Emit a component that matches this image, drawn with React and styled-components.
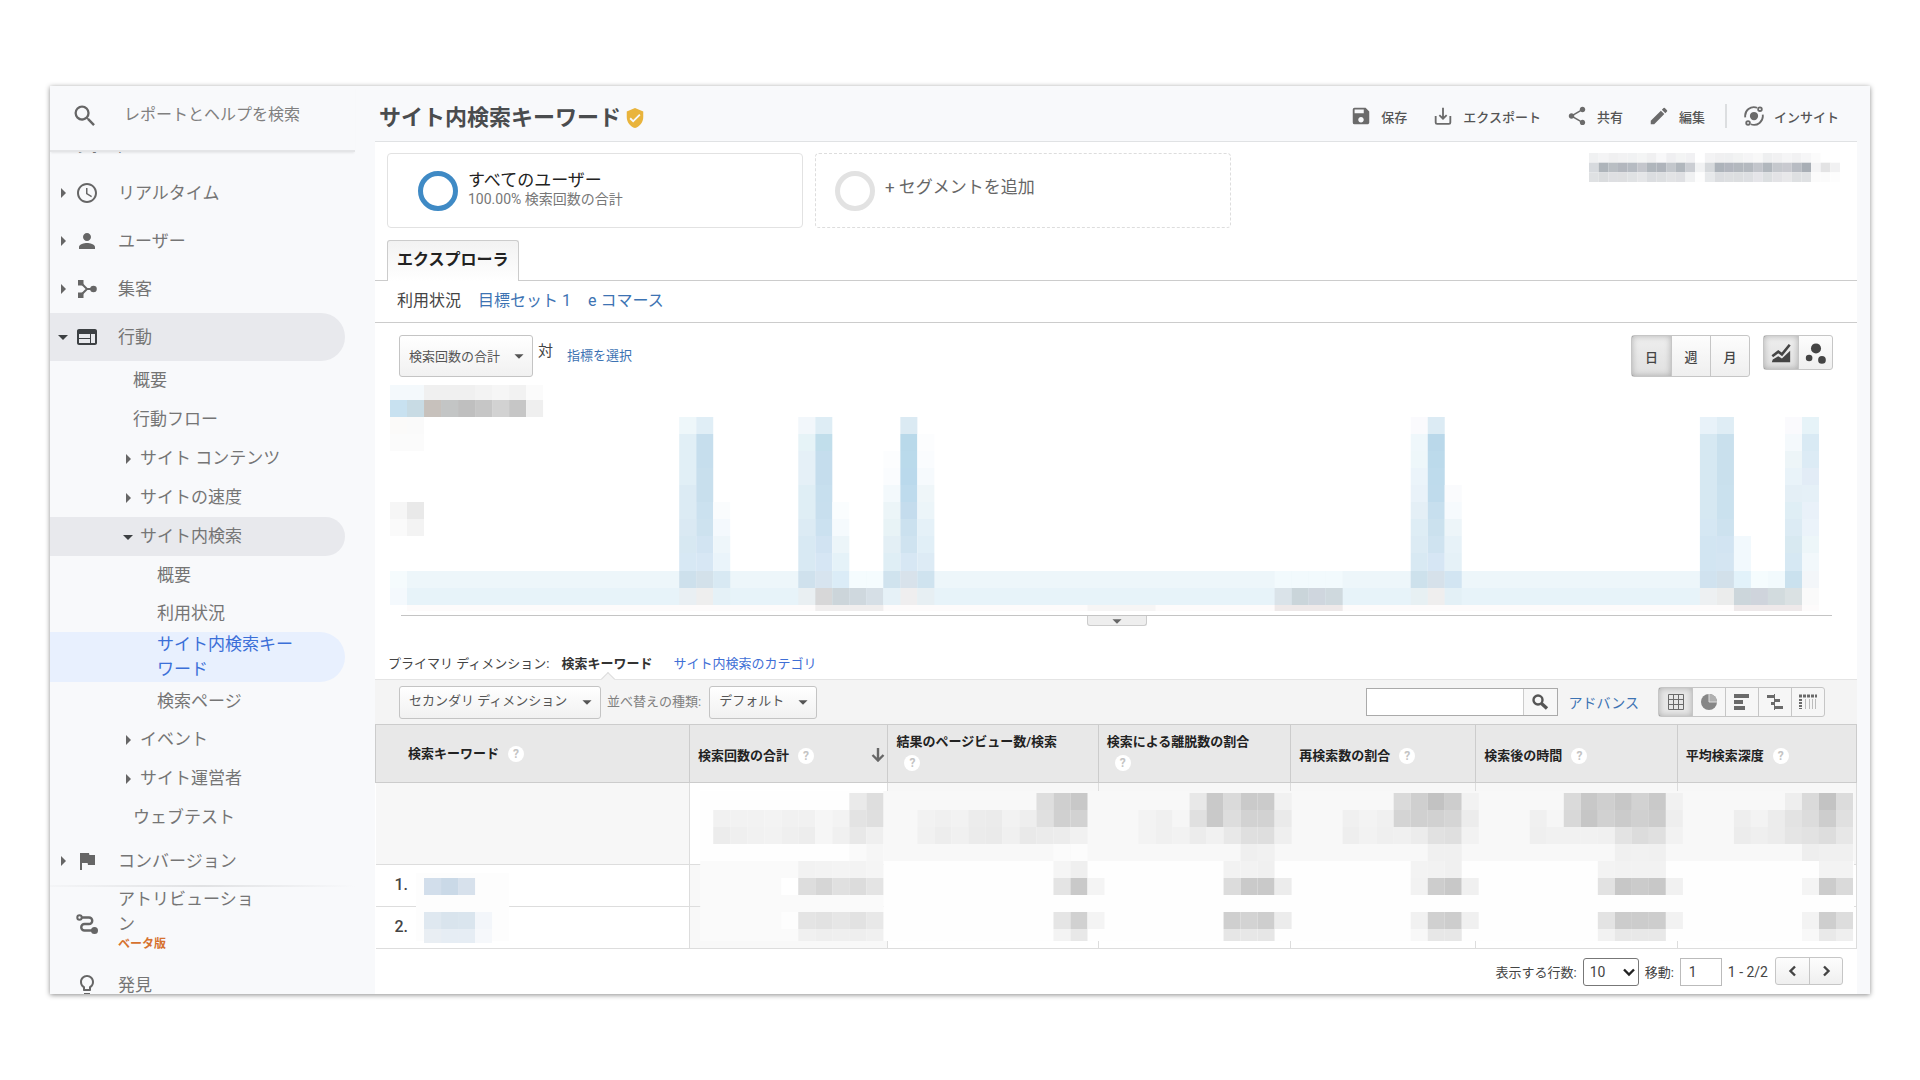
import React, { useState } from 'react';
import styled, { createGlobalStyle, css } from 'styled-components';
import {
    MdSearch,
    MdAccessTime,
    MdPerson,
    MdWeb,
    MdFlag,
    MdLightbulbOutline,
    MdArrowRight,
    MdArrowDropDown,
    MdSave,
    MdShare,
    MdEdit,
    MdVerifiedUser
} from 'react-icons/md';


//Icons

const AcquisitionIcon = () => (
    <svg viewBox="0 0 24 24" width="24" height="24" fill="currentColor">
        <rect x="3" y="3" width="5.500" height="5.500" />
        <rect x="3" y="15.500" width="5.500" height="5.500" />
        <circle cx="18.500" cy="12" r="3.300" />
        <path d="M6 6l6 6-6 6M12 12h6" fill="none" stroke="currentColor" strokeWidth="2" />
    </svg>
);

const AttributionIcon = () => (
    <svg viewBox="0 0 24 24" width="24" height="24" fill="none" stroke="currentColor" strokeWidth="2">
        <circle cx="4.5" cy="5.5" r="2.2" />
        <path d="M6.5 5.5H14a3.2 3.2 0 0 1 0 6.5h-4.500a3.200 3.200 0 0 0 0 6.500H18" strokeWidth="2.400" />
        <circle cx="19.500" cy="18.500" r="2.500" fill="currentColor" />
    </svg>
);

const ExportIcon = () => (
    <svg viewBox="0 0 24 24" width="22" height="22" fill="none" stroke="currentColor" strokeWidth="2">
        <path d="M4 12v7a1.500 1.500 0 0 0 1.500 1.500h13a1.500 1.500 0 0 0 1.500-1.500v-7" />
        <path d="M12 3v12M8 11l4 4 4-4" />
    </svg>
);

const InsightIcon = () => (
    <svg viewBox="0 0 24 24" width="22" height="22" fill="none" stroke="currentColor" strokeWidth="2">
        <circle cx="12" cy="12" r="4.500" fill="currentColor" stroke="none" />
        <path d="M2.500 13.500A9.600 9.600 0 0 1 15.500 3M21.500 10.500A9.600 9.600 0 0 1 8.500 21" />
        <circle cx="18.500" cy="4.500" r="2" />
        <circle cx="5.500" cy="19.500" r="2" />
    </svg>
);

const TrendIcon = () => (
    <svg viewBox="0 0 24 24" width="22" height="22" fill="currentColor">
        <path d="M2 22l1-3 6-3.500 4 2.500 9-8.500v12.500z" />
        <path d="M2.500 15.500l6.500-5 4 3L21.500 3" fill="none" stroke="currentColor" strokeWidth="2.800" />
    </svg>
);

const MotionIcon = () => (
    <svg viewBox="0 0 24 24" width="22" height="22" fill="currentColor">
        <circle cx="12" cy="7" r="5.500" />
        <circle cx="4.500" cy="17.500" r="3.600" />
        <circle cx="18.500" cy="19.500" r="4.200" />
    </svg>
);

const GridIcon = () => (
    <svg viewBox="0 0 16 16" width="16" height="16" fill="none" stroke="currentColor">
        <path d="M0.500 0.500h15v15h-15zM0.500 5.500h15M0.500 10.500h15M5.500 0.500v15M10.500 0.500v15" />
    </svg>
);

const PieIcon = () => (
    <svg viewBox="0 0 16 16" width="16" height="16">
        <circle cx="8" cy="8" r="8" fill="#868686" />
        <path d="M8 8V0a8 8 0 0 1 8 8z" fill="#b0b0b0" />
        <path d="M8 0v8h8" fill="none" stroke="#dedede" />
    </svg>
);

const BarsIcon = () => (
    <svg viewBox="0 0 16 16" width="16" height="16" fill="currentColor">
        <rect y="0" width="15" height="4" />
        <rect y="6" width="9" height="4" />
        <rect y="12" width="11" height="4" />
    </svg>
);

const CompareIcon = () => (
    <svg viewBox="0 0 16 16" width="16" height="16" fill="currentColor">
        <rect x="0" y="1" width="8" height="3" />
        <rect x="8" y="5" width="5" height="3" />
        <rect x="4" y="8" width="4" height="3" />
        <rect x="8" y="12" width="8" height="3" />
        <rect x="7" y="0" width="1" height="16" />
    </svg>
);

const PivotIcon = () => (
    <svg viewBox="0 0 18 16" width="18" height="16" fill="none" stroke="currentColor">
        <path d="M0 2h18" strokeWidth="3" strokeDasharray="3 1" />
        <path d="M1.500 5v10" strokeWidth="3" strokeDasharray="2 1" />
        <path d="M6.500 5v10M10.500 5v10M13.500 5v10M16.500 5v10" opacity="0.400" />
    </svg>
);

const LensIcon = () => (
    <svg viewBox="0 0 18 18" width="18" height="18" fill="none" stroke="currentColor">
        <circle cx="7" cy="7" r="4.500" strokeWidth="2.400" />
        <path d="M10.500 10.500l5.500 5" strokeWidth="3.400" />
    </svg>
);

const Chevron = ({ d }) => (
    <svg viewBox="0 0 12 12" width="12" height="12" fill="none" stroke="currentColor" strokeWidth="2.400">
        <path d={d} />
    </svg>
);

const SortIcon = () => (
    <svg viewBox="0 0 14 14" width="14" height="14" fill="none" stroke="currentColor" strokeWidth="2.400">
        <path d="M7 0v12M1.500 7L7 12.500 12.500 7" />
    </svg>
);


//Data

const topMenu = [
    { label: 'リアルタイム', icon: <MdAccessTime /> },
    { label: 'ユーザー', icon: <MdPerson /> },
    { label: '集客', icon: <AcquisitionIcon /> }
];

const behaviorMenu = [
    { label: '概要', level: 2 },
    { label: '行動フロー', level: 2 },
    { label: 'サイト コンテンツ', level: 2, arrow: true },
    { label: 'サイトの速度', level: 2, arrow: true },
    { label: 'サイト内検索', level: 2, arrow: true, open: true },
    { label: '概要', level: 3 },
    { label: '利用状況', level: 3 },
    { label: 'サイト内検索キーワード', level: 3, current: true },
    { label: '検索ページ', level: 3 },
    { label: 'イベント', level: 2, arrow: true },
    { label: 'サイト運営者', level: 2, arrow: true },
    { label: 'ウェブテスト', level: 2 }
];

const columns = [
    { label: '検索キーワード', width: '21.2%' },
    { label: '検索回数の合計', width: '13.4%', sorted: true },
    { label: '結果のページビュー数/検索', width: '14.2%', wrap: true },
    { label: '検索による離脱数の割合', width: '13%', wrap: true },
    { label: '再検索数の割合', width: '12.5%' },
    { label: '検索後の時間', width: '13.6%' },
    { label: '平均検索深度', width: '12.1%' }
];

// masked chart: column -> colours from the top row down, "-" leaves a cell empty
const spikes = {
    17: 'eef7fa e1eff6 e1eff6 e1eff6 dcebf4 dcebf4 dae9f3 d7e8f2 d7e8f4 cde0ec e9eff3',
    18: 'e0eef6 c6deed c6deed c8dfed c8dfed cbe1ef cde2ef d2e4f2 d7e7f4 d3e1ea eeeeee',
    19: '- - - - - fafcfd f4f9fd eef6fa eaf4fa d8e9f3 e5f1f7',
    24: 'f2f7fb e6f3f7 e5f0f7 e5f0f7 dfeef5 dfeef5 dcebf4 d8e9f3 d8e9f3 cfe1ed e9eff2',
    25: 'deedf5 c1deeb c5dded c5dded c7dfee c8dfee cbe1f0 d1e3f2 d6e6f4 d7e4ef d7d7d8',
    26: '- - - - - fafdfe f5fafd ecf5f9 e5f2f8 dbecf7 ccd5da',
    27: '- - - - - - - - - f5fcfe cfd8de',
    28: '- - - - - - - - - f5fcfe d6dfe6',
    29: '- - fcfdfe fafcfe f3f9fc ecf5f8 e8f3f6 e3eff5 dfeef5 d0e3ee e6f1f7',
    30: 'dbeaf3 b9d9ea badaeb bad9ec bedbed c4dced cbe1ef cfe3f0 d7e7f4 d8e2eb efeeef',
    31: '- fcfdfe fafcfe f6fafd eff6f9 ecf5f9 e5f1f8 e1eff7 ddebf5 cfe3ef e7eff3',
    52: '- - - - - - - - - f2fafd dae3e9',
    53: '- - - - - - - - - f2fafd cad5da',
    54: '- - - - - - - - - f2fafd cfd6de',
    55: '- - - - - - - - - f2fafd cfd9de',
    60: 'fafafd eff7fb eef7fa ebf4fa e9f2f9 e4eff6 deedf5 dcebf4 d8e9f3 cde1ec e7f0f3',
    61: 'dcebf4 bad8ea bcdaeb bedbec bfdbec c7dfee cbe1ee cfe3f0 d6e6f4 d6e1ea efeeee',
    62: '- - - - fafbfd f6fafd edf5f9 e7f2f8 e5f1f7 d2e5f2 e3f0f6',
    77: 'e8f2f9 d6e8f2 d6e8f2 d6e8f2 d6e8f2 d6e8f2 d5e7f3 d2e5f2 d2e5f2 d0e2ef edf0f2',
    78: 'dfedf5 c9e0ed c9e0ed c9e0ed cae1ee cae1ee cde2ef d2e4f2 d4e5f2 d2e0ea ebecec',
    79: '- - - - - - - f2f9fd f2f9fd e2f2fa ccd6db',
    80: '- - - - - - - - - f5fcfe cfd4dc',
    81: '- - - - - - - - - f2fafd d2dbde',
    82: 'fafafd f4f9fc edf5f8 e9f3f9 e4eff6 dfeef5 dcebf4 d8e9f1 d6e8f3 cae1ee dae1e3',
    83: 'e6f3f8 d9eaf4 dcebf5 e2ecf6 e5f0f7 e9f1f9 ebf3fa edf6f9 f2f8fb f3f6f9 fafafa'
};

const legendCells = [
    'f4f9fc f4f9fc f0f0f0 f0f0f0 f0f0f0 f3f3f3 f6f6f6 f2f2f2 fbfbfb',
    'c8e1f0 c8dbe4 c7c1bc c3c5c5 bfbfbf c6c6c6 d2d2d2 c6c6c6 efefef'
];

// masked table values: y, height, then runs of [first column, grey levels]
const maskRows = [
    { y: 10, h: 17, runs: [[8, 'ea de'], [19, 'de cf c8'], [28, 'e8 c9 da ca cb f1'], [40, 'da cf c2 cd f2'], [50, 'da c8 cf c7 d2 c9 f1'], [63, 'ee da c3 dc']] },
    { y: 27, h: 17, runs: [[0, 'f1 f2 f2 f3 f1 f1 f6 f3 e3 df'], [12, 'f2 f0 f2 ec eb f2 ee e0 d0 d2'], [25, 'f3 f0 f6 e0 c9 dd d2 d2 ea'], [37, 'f0 f3 f0 d4 d0 d1 d5 ec'], [48, 'f0 f6 d8 c6 d1 cb d0 cc ee'], [60, 'ee f3 ec e3 dc cd e0']] },
    { y: 44, h: 17, runs: [[0, 'ec ef f1 f2 ef ed f6 f0 e8 ef'], [12, 'f1 ed f0 eb ea f0 e9 eb ec f1'], [25, 'f3 f0 f2 ec f1 e8 df de ef'], [37, 'ee f2 ef f0 ec e1 df f2'], [48, 'ef f1 f1 f1 f0 e3 dc e0 f2'], [60, 'ec ef ec e5 e2 dd e7']] },
    { y: 61, h: 17, runs: [[8, 'fa f6'], [20, 'fb fc'], [31, 'ef f1'], [42, 'f0 f0'], [53, 'f0 f1 f0'], [64, 'ee f0 f0']] },
    { y: 78, h: 17, runs: [[5, 'f2 f3 f4 f3 f5'], [20, 'f5 ef'], [30, 'f2 f2 f0'], [41, 'f3 f2 f0'], [52, 'f3 f2 f2 f2'], [65, 'f3 f3']] },
    { y: 95, h: 17, runs: [[4, 'ff dd d6 e0 dc e4'], [20, 'e4 c9 f4'], [30, 'dc ca c9 ec'], [41, 'f2 cd c8 f0'], [52, 'e2 c7 cb c8 f1'], [64, 'f4 cc da']] },
    { y: 129, h: 17, runs: [[4, 'fd e4 e2 e6 e2 e8'], [20, 'e5 d1 f4'], [30, 'cf d3 ce ec'], [41, 'f1 d0 cd f0'], [52, 'e3 cc cc cd f2'], [64, 'f3 ce dd']] },
    { y: 146, h: 12, runs: [[5, 'f0 ee ef ee f0'], [20, 'f3 e8'], [30, 'e6 e7 e6'], [41, 'f8 e7 e7'], [52, 'f2 e8 e8 e8'], [64, 'f8 e9 ef']] }
];

const accountCells = [
    'f0f1f2 f4f4f5 f0f0f1 f2f2f3 f1f2f3 f4f5f5 f0f0f1 f8f8f9 efeff1 f3f4f4 f1f1f3 ffffff f3f3f4 f0f0f1 eff0f1 f2f3f3 f5f5f6 f8f8f8 eeeff0 f1f1f2 f5f5f6 f2f2f3 f6f6f7 fbfbfb ffffff ffffff',
    'd7dade aeb4ba b9bec3 b3b7be b6bbc2 c4c6cc b0b6bc afb4bb c3c7cc b1b7bd cbced3 f1f2f3 d6d9dc adb3ba b2b6be b3b8be b4b9bf c2c5cb b1b7bd c5c8cd c8c9cf b8bcc3 a8aeb5 f4f4f5 e3e3e4 f1f1f2',
    'dfe1e3 dadcde dedfe2 dedfe1 e0e2e4 e5e6e8 dbdde0 dddfe1 e2e3e5 dfe0e3 f0f1f2 fdfdfd e7e9eb dbdde0 dddfe1 dcdee0 dddfe2 e5e5e9 dcdfe1 e3e3e6 e8e8ea dee0e2 dfe1e3 fbfbfb fbfbfb fdfdfd'
];

const Cells = ({ colors, x = 0, y, w = 17, h = 17 }) => (
    <>
        {colors.split(' ').map((c, i) => (
            c !== '-' && <rect key={i} x={x + i * w} y={y} width={w} height={h} fill={`#${c.length === 2 ? c + c + c : c}`} />
        ))}
    </>
);


//Sidebar

const Sidebar = () => (
    <Side>
        <SearchRow>
            <MdSearch />
            <input aria-label="レポートとヘルプを検索" placeholder="レポートとヘルプを検索" />
        </SearchRow>
        <Nav>
            <Section><span>レポート</span></Section>
            {topMenu.map((item) => (
                <MenuItem href="#" key={item.label}>
                    <MdArrowRight />
                    {item.icon}
                    <span>{item.label}</span>
                </MenuItem>
            ))}
            <MenuItem href="#" $open>
                <MdArrowDropDown />
                <MdWeb />
                <span>行動</span>
            </MenuItem>
            {behaviorMenu.map((item, i) => (
                <SubItem href="#" key={i} $level={item.level} $arrow={item.arrow} $open={item.open} $current={item.current}>
                    {item.arrow && (item.open ? <MdArrowDropDown /> : <MdArrowRight />)}
                    <span>{item.label}</span>
                </SubItem>
            ))}
            <MenuItem href="#">
                <MdArrowRight />
                <MdFlag />
                <span>コンバージョン</span>
            </MenuItem>
            <Divider />
            <MenuItem href="#" $plain $tall>
                <AttributionIcon />
                <span>アトリビューション<Beta>ベータ版</Beta></span>
            </MenuItem>
            <MenuItem href="#" $plain>
                <MdLightbulbOutline />
                <span>発見</span>
            </MenuItem>
        </Nav>
    </Side>
);


//Report header and segments

const Header = () => (
    <TopBar>
        <h1>サイト内検索キーワード</h1>
        <MdVerifiedUser color="#e9b43c" size={22} />
        <Actions>
            <button><MdSave />保存</button>
            <button><ExportIcon />エクスポート</button>
            <button><MdShare />共有</button>
            <button><MdEdit />編集</button>
            <i />
            <button><InsightIcon />インサイト</button>
        </Actions>
    </TopBar>
);

const Segments = () => (
    <SegmentRow>
        <Segment>
            <Ring $color="#3f8ac5" />
            <div>
                <p>すべてのユーザー</p>
                <small>100.00% 検索回数の合計</small>
            </div>
        </Segment>
        <Segment $empty>
            <Ring $color="#e2e2e2" />
            <div>
                <p>+ セグメントを追加</p>
            </div>
        </Segment>
        <Account viewBox="0 0 260 30" aria-hidden="true">
            {accountCells.map((row, i) => <Cells key={i} colors={row} y={i * 10} w={10} h={10} />)}
        </Account>
    </SegmentRow>
);

const Dropdown = ({ label, children, tall }) => (
    <SelectBox $tall={tall}>
        <select aria-label={label}>{children}</select>
        <MdArrowDropDown />
    </SelectBox>
);

const Chart = () => (
    <ChartSvg viewBox="0 0 1432 230" preserveAspectRatio="none" aria-hidden="true">
        {legendCells.map((row, i) => <Cells key={i} colors={row} y={i * 15} h={i ? 17 : 15} />)}
        <Cells colors="fbfaf9 fafafa" y={32} />
        <Cells colors="fbfbfb fbfbfb" y={49} />
        <Cells colors="f6f6f6 e9e9e9" y={117} />
        <Cells colors="fafafa f3f3f3" y={134} />
        <rect x="17" y="186" width="1394" height="17" fill="#edf6fa" />
        <rect x="17" y="203" width="1394" height="17" fill="#e7f3f9" />
        <Cells colors="f5fbfd" y={186} />
        <Cells colors="f4f9fd" y={203} />
        <rect x="17" y="220" width="1411" height="6" fill="#fdfbfb" />
        {Object.entries(spikes).map(([col, colors]) => (
            colors.split(' ').map((c, i) => (
                c !== '-' && <rect key={col + i} x={col * 17} y={i > 8 ? 186 + (i - 9) * 17 : 32 + i * 17} width="17" height={i === 8 ? 18 : 17} fill={`#${c}`} />
            ))
        ))}
        <rect x="425" y="220" width="68" height="6" fill="#f0eeee" />
        <rect x="697" y="220" width="68" height="6" fill="#f6f5f5" />
        <rect x="884" y="220" width="68" height="6" fill="#eee9e9" />
        <rect x="1343" y="220" width="68" height="6" fill="#eee9ea" />
    </ChartSvg>
);


//Table

const DataTable = () => (
    <TableWrap>
        <Table>
            <colgroup>
                {columns.map((col) => <col key={col.label} style={{ width: col.width }} />)}
            </colgroup>
            <thead>
                <tr>
                    {columns.map((col) => (
                        <th key={col.label} scope="col">
                            <HeadCell $wrap={col.wrap}>
                                <span>{col.label}</span>
                                <Help aria-label="ヘルプ">?</Help>
                                {col.sorted && <SortIcon />}
                            </HeadCell>
                        </th>
                    ))}
                </tr>
            </thead>
            <tbody>
                <SummaryRow>{columns.map((col) => <td key={col.label} />)}</SummaryRow>
                {[1, 2].map((n) => (
                    <tr key={n}>
                        {columns.map((col, i) => <td key={col.label}>{i === 0 && `${n}.`}</td>)}
                    </tr>
                ))}
            </tbody>
        </Table>
        <TableMask viewBox="0 0 1481 166" preserveAspectRatio="none" aria-hidden="true">
            <rect x="325" y="8" width="183" height="70" fill="#fefefe" />
            <rect x="508" y="8" width="970" height="70" fill="#f8f8f8" />
            <rect x="325" y="78" width="183" height="80" fill="#fafafa" />
            <rect x="508" y="78" width="970" height="80" fill="#fefefe" />
            <rect x="41" y="90" width="93" height="68" fill="#fdfdfd" />
            <Cells colors="d2deeb cad9e7 d7e1ec" x={49} y={95} />
            <Cells colors="dfe8f0 d9e4ed dae5ee f3f6fa" x={49} y={129} />
            <Cells colors="e9eef3 e6edf4 e6edf4 f6f8fb" x={49} y={146} h={14} />
            {maskRows.map((row) => (
                row.runs.map(([col, colors]) => (
                    <Cells key={`${row.y}-${col}`} colors={colors} x={338 + col * 17} y={row.y} h={row.h} />
                ))
            ))}
        </TableMask>
    </TableWrap>
);

const App = () => {

    const [period, setPeriod] = useState('日');
    const [view, setView] = useState(0);

    const views = [<GridIcon />, <PieIcon />, <BarsIcon />, <CompareIcon />, <PivotIcon />];
    const viewNames = ['表', '円グラフ', '棒グラフ', '比較', 'ピボット'];

    return (
        <>
            <GlobalStyle />
            <Window>
                <Sidebar />
                <Main>
                    <Header />
                    <Report>
                        <Segments />
                        <Tabs>
                            <button>エクスプローラ</button>
                        </Tabs>
                        <SubTabs>
                            <span>利用状況</span>
                            <a href="#">目標セット 1</a>
                            <a href="#">e コマース</a>
                        </SubTabs>
                        <ChartBar>
                            <Dropdown label="指標" tall><option>検索回数の合計</option></Dropdown>
                            <Versus>対</Versus>
                            <a href="#">指標を選択</a>
                            <Push />
                            <ButtonGroup $width={39} $height={42}>
                                {['日', '週', '月'].map((p) => (
                                    <GroupButton key={p} $active={p === period} onClick={() => setPeriod(p)}>{p}</GroupButton>
                                ))}
                            </ButtonGroup>
                            <ButtonGroup $width={34} $height={35}>
                                <GroupButton $active aria-label="折れ線グラフ"><TrendIcon /></GroupButton>
                                <GroupButton aria-label="モーション グラフ"><MotionIcon /></GroupButton>
                            </ButtonGroup>
                        </ChartBar>
                        <Chart />
                        <ChartEdge>
                            <button aria-label="グラフを閉じる"><MdArrowDropDown /></button>
                        </ChartEdge>
                        <Dimensions>
                            <span>プライマリ ディメンション:</span>
                            <b>検索キーワード</b>
                            <a href="#">サイト内検索のカテゴリ</a>
                        </Dimensions>
                        <TableBar>
                            <Dropdown label="セカンダリ ディメンション"><option>セカンダリ ディメンション</option></Dropdown>
                            <label htmlFor="sort">並べ替えの種類:</label>
                            <SelectBox>
                                <select id="sort"><option>デフォルト</option></select>
                                <MdArrowDropDown />
                            </SelectBox>
                            <Push />
                            <TableSearch>
                                <input aria-label="検索" />
                                <button aria-label="検索"><LensIcon /></button>
                            </TableSearch>
                            <a href="#">アドバンス</a>
                            <ButtonGroup $width={33} $height={30} $light>
                                {views.map((icon, i) => (
                                    <GroupButton key={i} $active={i === view} aria-label={viewNames[i]} onClick={() => setView(i)}>{icon}</GroupButton>
                                ))}
                            </ButtonGroup>
                        </TableBar>
                        <DataTable />
                        <Pager>
                            <label htmlFor="rows">表示する行数:</label>
                            <RowSelect>
                                <select id="rows"><option>10</option></select>
                                <Chevron d="M1 3.500l5 5 5-5" />
                            </RowSelect>
                            <label htmlFor="page">移動:</label>
                            <input id="page" defaultValue="1" />
                            <span>1 - 2/2</span>
                            <ButtonGroup $width={33} $height={28}>
                                <GroupButton aria-label="前へ"><Chevron d="M8 1.500L3.500 6 8 10.500" /></GroupButton>
                                <GroupButton aria-label="次へ"><Chevron d="M4 1.500L8.500 6 4 10.500" /></GroupButton>
                            </ButtonGroup>
                        </Pager>
                    </Report>
                </Main>
            </Window>
        </>
    );
};

const GlobalStyle = createGlobalStyle`
  * {
      box-sizing: border-box;
      margin: 0;
      padding: 0;
  }
  body {
      background: #fff;
      color: #444;
      font: 13px Roboto, "Noto Sans CJK JP", sans-serif;
  }
  button, input, select {
      font: inherit;
      color: inherit;
  }
  button {
      cursor: pointer;
  }
  a {
      color: #3d73b3;
      text-decoration: none;
  }
  svg {
      flex: none;
  }
`;

const Window = styled.div`
  display: flex;
  height: calc(100vh - 172px);
  margin: 86px 50px;
  background: #f8f9fb;
  box-shadow: 0 1px 5px rgba(0, 0, 0, 0.45);
  overflow: hidden;
`;

const Side = styled.aside`
  flex: none;
  display: flex;
  flex-direction: column;
  width: 325px;
  color: #757575;
`;

const SearchRow = styled.div`
  flex: none;
  display: flex;
  align-items: center;
  gap: 25px;
  height: 66px;
  margin-right: 20px;
  padding: 0 0 8px 21px;
  border-bottom: 2px solid #e4e5e7;
  box-shadow: 0 2px 2px -1px rgba(0, 0, 0, 0.08);
  svg {
      width: 28px;
      height: 28px;
      margin-top: 4px;
      color: #666;
  }
  input {
      width: 200px;
      border: none;
      background: none;
      font-size: 16px;
      outline: none;
  }
  input::placeholder {
      color: #808080;
  }
`;

const Nav = styled.nav`
  flex: 1;
  min-height: 0;
  overflow: hidden;
`;

const Section = styled.div`
  height: 17px;
  padding-left: 26px;
  overflow: hidden;
  font-size: 13px;
  line-height: 20px;
  span {
      display: block;
      margin-top: -14px;
  }
`;

const MenuItem = styled.a`
  display: flex;
  align-items: center;
  height: ${(p) => (p.$tall ? 74 : 48)}px;
  margin-right: 30px;
  padding-left: ${(p) => (p.$plain ? 25 : 1)}px;
  border-radius: 0 24px 24px 0;
  background: ${(p) => (p.$open ? '#e8e9ed' : 'none')};
  color: #757575;
  font-size: 17px;
  line-height: 25px;
  svg {
      width: 24px;
      height: 24px;
      color: ${(p) => (p.$open ? '#3c4043' : '#666')};
  }
  span {
      width: 140px;
      margin-left: 19px;
      padding-bottom: ${(p) => (p.$tall ? 10 : 0)}px;
  }
`;

const Beta = styled.b`
  display: block;
  color: #d6722f;
  font-size: 12px;
  line-height: 14px;
`;

const SubItem = styled(MenuItem)`
  height: ${(p) => (p.$level === 2 ? 39 : 38)}px;
  padding-left: ${(p) => (p.$level === 3 ? 107 : p.$arrow ? 66 : 83)}px;
  span {
      width: auto;
      margin-left: 0;
  }
  ${(p) => p.$current && css`
      height: 50px;
      padding-right: 40px;
      border-radius: 0 25px 25px 0;
      background: #e8f0fe;
      color: #3b6fd8;
  `}
`;

const Divider = styled.hr`
  height: 2px;
  margin-right: 20px;
  border: none;
  background: linear-gradient(90deg, #f4f5f7, #e0e1e3 50%, #f8f9fb);
`;

const Main = styled.main`
  flex: 1;
  min-width: 0;
  display: flex;
  flex-direction: column;
  margin-right: 13px;
`;

const TopBar = styled.header`
  flex: none;
  display: flex;
  align-items: center;
  height: 56px;
  padding: 8px 18px 0 4px;
  border-bottom: 1px solid #e0e2e4;
  h1 {
      margin-right: 3px;
      font-size: 22px;
      font-weight: 700;
      line-height: 32px;
      color: #4a4c4e;
  }
`;

const Actions = styled.div`
  display: flex;
  align-items: center;
  gap: 25px;
  margin: 0 0 3px auto;
  button {
      display: flex;
      align-items: center;
      gap: 9px;
      border: none;
      background: none;
      color: #555;
      font-weight: 500;
  }
  svg {
      width: 22px;
      height: 22px;
      color: #6b6b6b;
  }
  i {
      width: 2px;
      height: 24px;
      margin: 0 -9px 0 -5px;
      background: #dcdee0;
  }
`;

const Report = styled.div`
  flex: 1;
  min-height: 0;
  background: #fff;
`;

const SegmentRow = styled.div`
  display: flex;
  gap: 12px;
  padding: 11px 17px 12px 12px;
`;

const Segment = styled.button`
  flex: 0 1 416px;
  display: flex;
  align-items: center;
  gap: 10px;
  height: 75px;
  padding: 0 0 0 ${(p) => (p.$empty ? 19 : 30)}px;
  border: 1px ${(p) => (p.$empty ? 'dashed #ddd' : 'solid #e2e2e2')};
  border-radius: 4px;
  background: #fff;
  text-align: left;
  div {
      padding-bottom: ${(p) => (p.$empty ? 7 : 4)}px;
  }
  p {
      color: ${(p) => (p.$empty ? '#666' : '#222')};
      font-size: 17px;
      line-height: 20px;
  }
  small {
      display: block;
      color: #777;
      font-size: 14px;
      line-height: 18px;
  }
`;

const Ring = styled.span`
  flex: none;
  width: 40px;
  height: 40px;
  border: 5px solid ${(p) => p.$color};
  border-radius: 50%;
`;

const Account = styled.svg`
  width: 251px;
  height: 29px;
  margin-left: auto;
`;

const Tabs = styled.div`
  display: flex;
  height: 41px;
  padding-left: 12px;
  border-bottom: 1px solid #ccc;
  button {
      height: 41px;
      padding: 0 9px 6px;
      border: 1px solid #ccc;
      border-bottom: none;
      border-radius: 3px 3px 0 0;
      background: linear-gradient(#f2f2f2, #fff);
      color: #222;
      font-size: 16px;
      font-weight: 700;
  }
`;

const SubTabs = styled.div`
  display: flex;
  align-items: center;
  gap: 17px;
  height: 42px;
  padding: 0 0 6px 22px;
  border-bottom: 1px solid #ccc;
  font-size: 16px;
`;

const ChartBar = styled.div`
  display: flex;
  align-items: flex-start;
  padding: 12px 24px 8px 24px;
  > a {
      line-height: 42px;
  }
  > div + div {
      margin-left: 13px;
  }
`;

const SelectBox = styled.span`
  position: relative;
  display: inline-flex;
  align-items: center;
  color: #555;
  select {
      appearance: none;
      height: ${(p) => (p.$tall ? 42 : 33)}px;
      padding: 0 31px ${(p) => (p.$tall ? 0 : 3)}px 9px;
      border: 1px solid #c4c4c4;
      border-radius: 3px;
      background: linear-gradient(#fff, #f1f1f1);
  }
  svg {
      position: absolute;
      right: 3px;
      width: 22px;
      height: 22px;
      pointer-events: none;
  }
`;

const Versus = styled.span`
  margin: 0 14px 0 5px;
  font-size: 15px;
  line-height: 32px;
`;

const Push = styled.span`
  flex: 1;
`;

const ButtonGroup = styled.div`
  display: flex;
  height: ${(p) => p.$height}px;
  border: 1px solid #c6c6c6;
  border-radius: 3px;
  background: ${(p) => (p.$light ? '#f6f6f6' : 'linear-gradient(#fdfdfd, #efefef)')};
  button {
      width: ${(p) => p.$width}px;
      color: ${(p) => (p.$light ? '#6a6a6a' : '#444')};
  }
`;

const GroupButton = styled.button`
  display: flex;
  align-items: center;
  justify-content: center;
  border: none;
  background: none;
  font-weight: 500;
  & + & {
      border-left: 1px solid #c6c6c6;
  }
  ${(p) => p.$active && css`
      background: rgba(0, 0, 0, 0.06);
      box-shadow: inset 0 0 6px rgba(0, 0, 0, 0.25);
  `}
`;

const ChartSvg = styled.svg`
  display: block;
  width: calc(100% - 49px);
  height: 230px;
  margin-left: 15px;
`;

const ChartEdge = styled.div`
  display: flex;
  justify-content: center;
  height: 32px;
  margin: 0 25px 0 26px;
  border-top: 1px solid #c4c4c4;
  button {
      display: flex;
      justify-content: center;
      align-items: center;
      width: 60px;
      height: 10px;
      border: 1px solid #ccc;
      border-top: none;
      border-radius: 0 0 3px 3px;
      background: #eee;
      color: #666;
  }
  svg {
      width: 22px;
      height: 22px;
  }
`;

const Dimensions = styled.div`
  display: flex;
  align-items: baseline;
  height: 32px;
  padding-left: 13px;
  line-height: 34px;
  b {
      position: relative;
      margin: 0 21px 0 12px;
      color: #333;
  }
  b::after {
      content: '';
      position: absolute;
      left: 42px;
      bottom: -3px;
      width: 9px;
      height: 9px;
      border: 1px solid #ddd;
      border-right: none;
      border-bottom: none;
      background: #f4f4f4;
      transform: rotate(45deg);
  }
  a {
      color: #3f6fd6;
  }
`;

const TableBar = styled.div`
  display: flex;
  align-items: center;
  height: 45px;
  padding: 0 32px 0 24px;
  border-top: 1px solid #e4e4e4;
  background: #f4f4f4;
  label {
      margin: 0 8px 3px 6px;
      color: #808080;
  }
  a {
      margin: 0 19px 0 11px;
      font-size: 14px;
  }
`;

const TableSearch = styled.div`
  display: flex;
  width: 192px;
  height: 28px;
  border: 1px solid #aaa;
  background: #fff;
  input {
      flex: 1;
      min-width: 0;
      border: none;
  }
  button {
      display: flex;
      align-items: center;
      justify-content: center;
      width: 34px;
      border: none;
      border-left: 1px solid #ccc;
      background: #f7f7f7;
      color: #555;
  }
`;

const TableWrap = styled.div`
  position: relative;
`;

const Table = styled.table`
  width: 100%;
  table-layout: fixed;
  border-collapse: collapse;
  th {
      height: 58px;
      padding: 4px 8px 0;
      border: 1px solid #ccc;
      background: #e8e8e8;
      color: #222;
      text-align: left;
  }
  th:first-child {
      padding: 0 8px 0 32px;
  }
  td {
      height: 42px;
      border: 1px solid #ddd;
      border-left-color: #ccc;
      background: #fff;
      font-size: 16px;
      font-weight: 500;
  }
  td:first-child {
      padding: 0 0 2px 19px;
      border-left: none;
  }
  td:nth-child(2) {
      background: #f8f8f8;
  }
`;

const SummaryRow = styled.tr`
  && td {
      height: 82px;
      background: #f7f7f7;
  }
  && td:nth-child(2) {
      background: #fff;
  }
`;

const HeadCell = styled.div`
  display: flex;
  flex-direction: ${(p) => (p.$wrap ? 'column' : 'row')};
  align-items: ${(p) => (p.$wrap ? 'flex-start' : 'center')};
  gap: ${(p) => (p.$wrap ? 4 : 9)}px;
  padding-bottom: ${(p) => (p.$wrap ? 8 : 0)}px;
  line-height: 18px;
  white-space: nowrap;
  button {
      margin-left: ${(p) => (p.$wrap ? 8 : 0)}px;
  }
  svg {
      margin: 0 -6px 2px auto;
      color: #666;
  }
`;

const Help = styled.button`
  width: 16px;
  height: 16px;
  border: none;
  border-radius: 50%;
  background: #fff;
  color: #c4c4c4;
  font-size: 12px;
  font-weight: 700;
  line-height: 16px;
`;

const TableMask = styled.svg`
  position: absolute;
  left: 0;
  bottom: 0;
  width: 100%;
  height: 166px;
  pointer-events: none;
`;

const Pager = styled.div`
  display: flex;
  align-items: center;
  justify-content: flex-end;
  gap: 6px;
  height: 46px;
  padding-right: 14px;
  label {
      margin-bottom: 2px;
  }
  input {
      width: 42px;
      height: 28px;
      padding-left: 8px;
      border: 1px solid #bbb;
      font-size: 14px;
  }
  > span {
      font-size: 14px;
  }
  > div {
      margin: 0 0 2px 1px;
      color: #222;
  }
`;

const RowSelect = styled.span`
  position: relative;
  display: inline-flex;
  align-items: center;
  select {
      appearance: none;
      width: 56px;
      height: 28px;
      padding-left: 6px;
      border: 1px solid #777;
      border-radius: 3px;
      background: #fff;
      font-size: 14px;
  }
  svg {
      position: absolute;
      right: 4px;
      color: #222;
      pointer-events: none;
  }
`;

export default App;
